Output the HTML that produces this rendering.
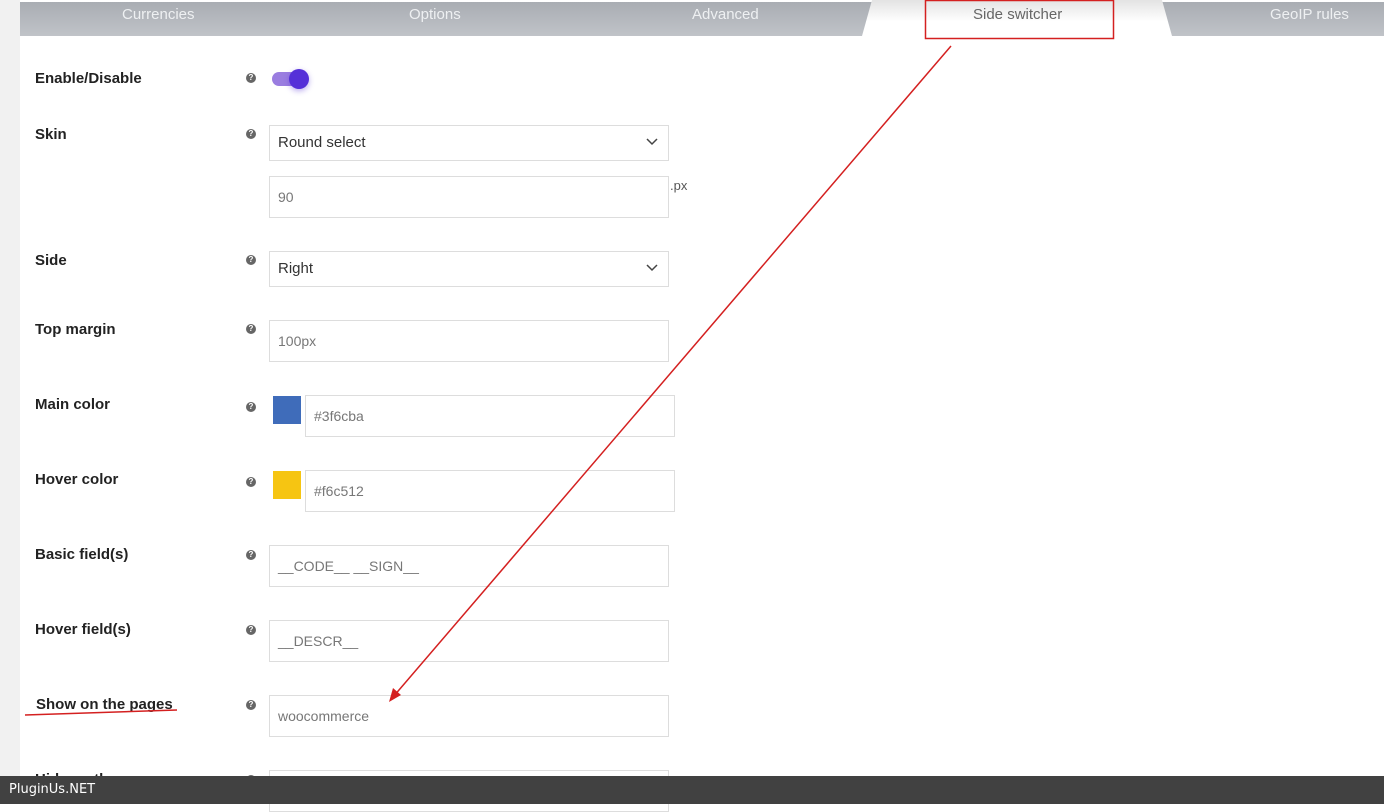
<!DOCTYPE html>
<html><head><style>
body{margin:0;width:1384px;height:804px;overflow:hidden;background:#fff;font-family:"Liberation Sans",Arial,sans-serif;position:relative}
.left{position:absolute;left:0;top:0;width:20px;height:804px;background:#f1f1f1}
.tabs{position:absolute;left:20px;top:2px;width:1364px;height:34px;background:linear-gradient(#a9adb3,#c0c3c8)}
.tab{position:absolute;top:6px;color:#eef0f2;font-size:15px}
.act{position:absolute;left:862px;top:0;width:310px;height:36px;background:linear-gradient(#e3e3e3,#fff 60%);clip-path:polygon(10px 0,300px 0,310px 36px,0 36px)}
.lbl{position:absolute;left:35px;font-weight:bold;font-size:15px;color:#222}
.q{position:absolute;left:246px;width:10px;height:10px;border-radius:50%;background:#666;color:#fff;font-size:8px;font-weight:bold;text-align:center;line-height:10px}
.in{position:absolute;left:269px;width:400px;border:1px solid #ddd;box-sizing:border-box;font-size:14px;color:#777;padding-left:8px}
.sel{color:#333;font-size:15px}
.chev{position:absolute;right:10px;top:12px}
.sw{position:absolute;left:273px;width:28px;height:28px}
.foot{position:absolute;z-index:5;left:0;top:776px;width:1384px;height:28px;background:#414141;color:#fff;font-family:"DejaVu Sans",sans-serif;font-size:13px;line-height:28px;padding-left:9px;box-sizing:border-box}
</style></head><body>
<div class="left"></div>
<div class="tabs"></div>
<div class="act"></div>
<div class="tab" style="left:122px">Currencies</div>
<div class="tab" style="left:409px">Options</div>
<div class="tab" style="left:692px">Advanced</div>
<div class="tab" style="left:973px;color:#666">Side switcher</div>
<div class="tab" style="left:1270px">GeoIP rules</div>

<div class="lbl" style="top:70px">Enable/Disable</div><div class="q" style="top:73px">?</div>
<div style="position:absolute;left:272px;top:72px;width:30px;height:14px;border-radius:7px;background:#9a7de0"></div>
<div style="position:absolute;left:289px;top:69px;width:20px;height:20px;border-radius:50%;background:#5530d8;box-shadow:0 2px 6px rgba(85,48,216,.4)"></div>

<div class="lbl" style="top:126px">Skin</div><div class="q" style="top:129px">?</div>
<div class="in sel" style="top:125px;height:36px;line-height:34px">Round select<svg class="chev" width="12" height="8"><polyline points="1,1 6,6 11,1" fill="none" stroke="#444" stroke-width="1.5"/></svg></div>
<div class="in" style="top:176px;height:42px;line-height:40px">90</div>
<div style="position:absolute;left:670px;top:178px;font-size:13px;color:#555">.px</div>

<div class="lbl" style="top:252px">Side</div><div class="q" style="top:255px">?</div>
<div class="in sel" style="top:251px;height:36px;line-height:34px">Right<svg class="chev" width="12" height="8"><polyline points="1,1 6,6 11,1" fill="none" stroke="#444" stroke-width="1.5"/></svg></div>

<div class="lbl" style="top:321px">Top margin</div><div class="q" style="top:324px">?</div>
<div class="in" style="top:320px;height:42px;line-height:40px">100px</div>

<div class="lbl" style="top:396px">Main color</div><div class="q" style="top:402px">?</div>
<div class="sw" style="top:396px;background:#3f6cba"></div>
<div class="in" style="left:305px;width:370px;top:395px;height:42px;line-height:40px">#3f6cba</div>

<div class="lbl" style="top:471px">Hover color</div><div class="q" style="top:477px">?</div>
<div class="sw" style="top:471px;background:#f6c512"></div>
<div class="in" style="left:305px;width:370px;top:470px;height:42px;line-height:40px">#f6c512</div>

<div class="lbl" style="top:546px">Basic field(s)</div><div class="q" style="top:550px">?</div>
<div class="in" style="top:545px;height:42px;line-height:40px">__CODE__ __SIGN__</div>

<div class="lbl" style="top:621px">Hover field(s)</div><div class="q" style="top:625px">?</div>
<div class="in" style="top:620px;height:42px;line-height:40px">__DESCR__</div>

<div class="lbl" style="top:696px;left:36px">Show on the pages</div><div class="q" style="top:700px">?</div>
<div class="in" style="top:695px;height:42px;line-height:40px">woocommerce</div>

<div class="lbl" style="top:771px">Hide on the pages</div><div class="q" style="top:775px">?</div>
<div class="in" style="top:770px;height:42px"></div>

<svg style="position:absolute;left:0;top:0;z-index:3" width="1384" height="804">
<rect x="925.5" y="0.5" width="188" height="38" fill="none" stroke="#d42020" stroke-width="1.5"/>
<line x1="951" y1="46" x2="393" y2="697" stroke="#d42020" stroke-width="1.5"/>
<polygon points="389,702 393,688 401,695" fill="#d42020"/>
<line x1="25" y1="715" x2="177" y2="710" stroke="#d42020" stroke-width="1.5"/>
</svg>
<div class="foot">PluginUs.NET</div>
</body></html>
